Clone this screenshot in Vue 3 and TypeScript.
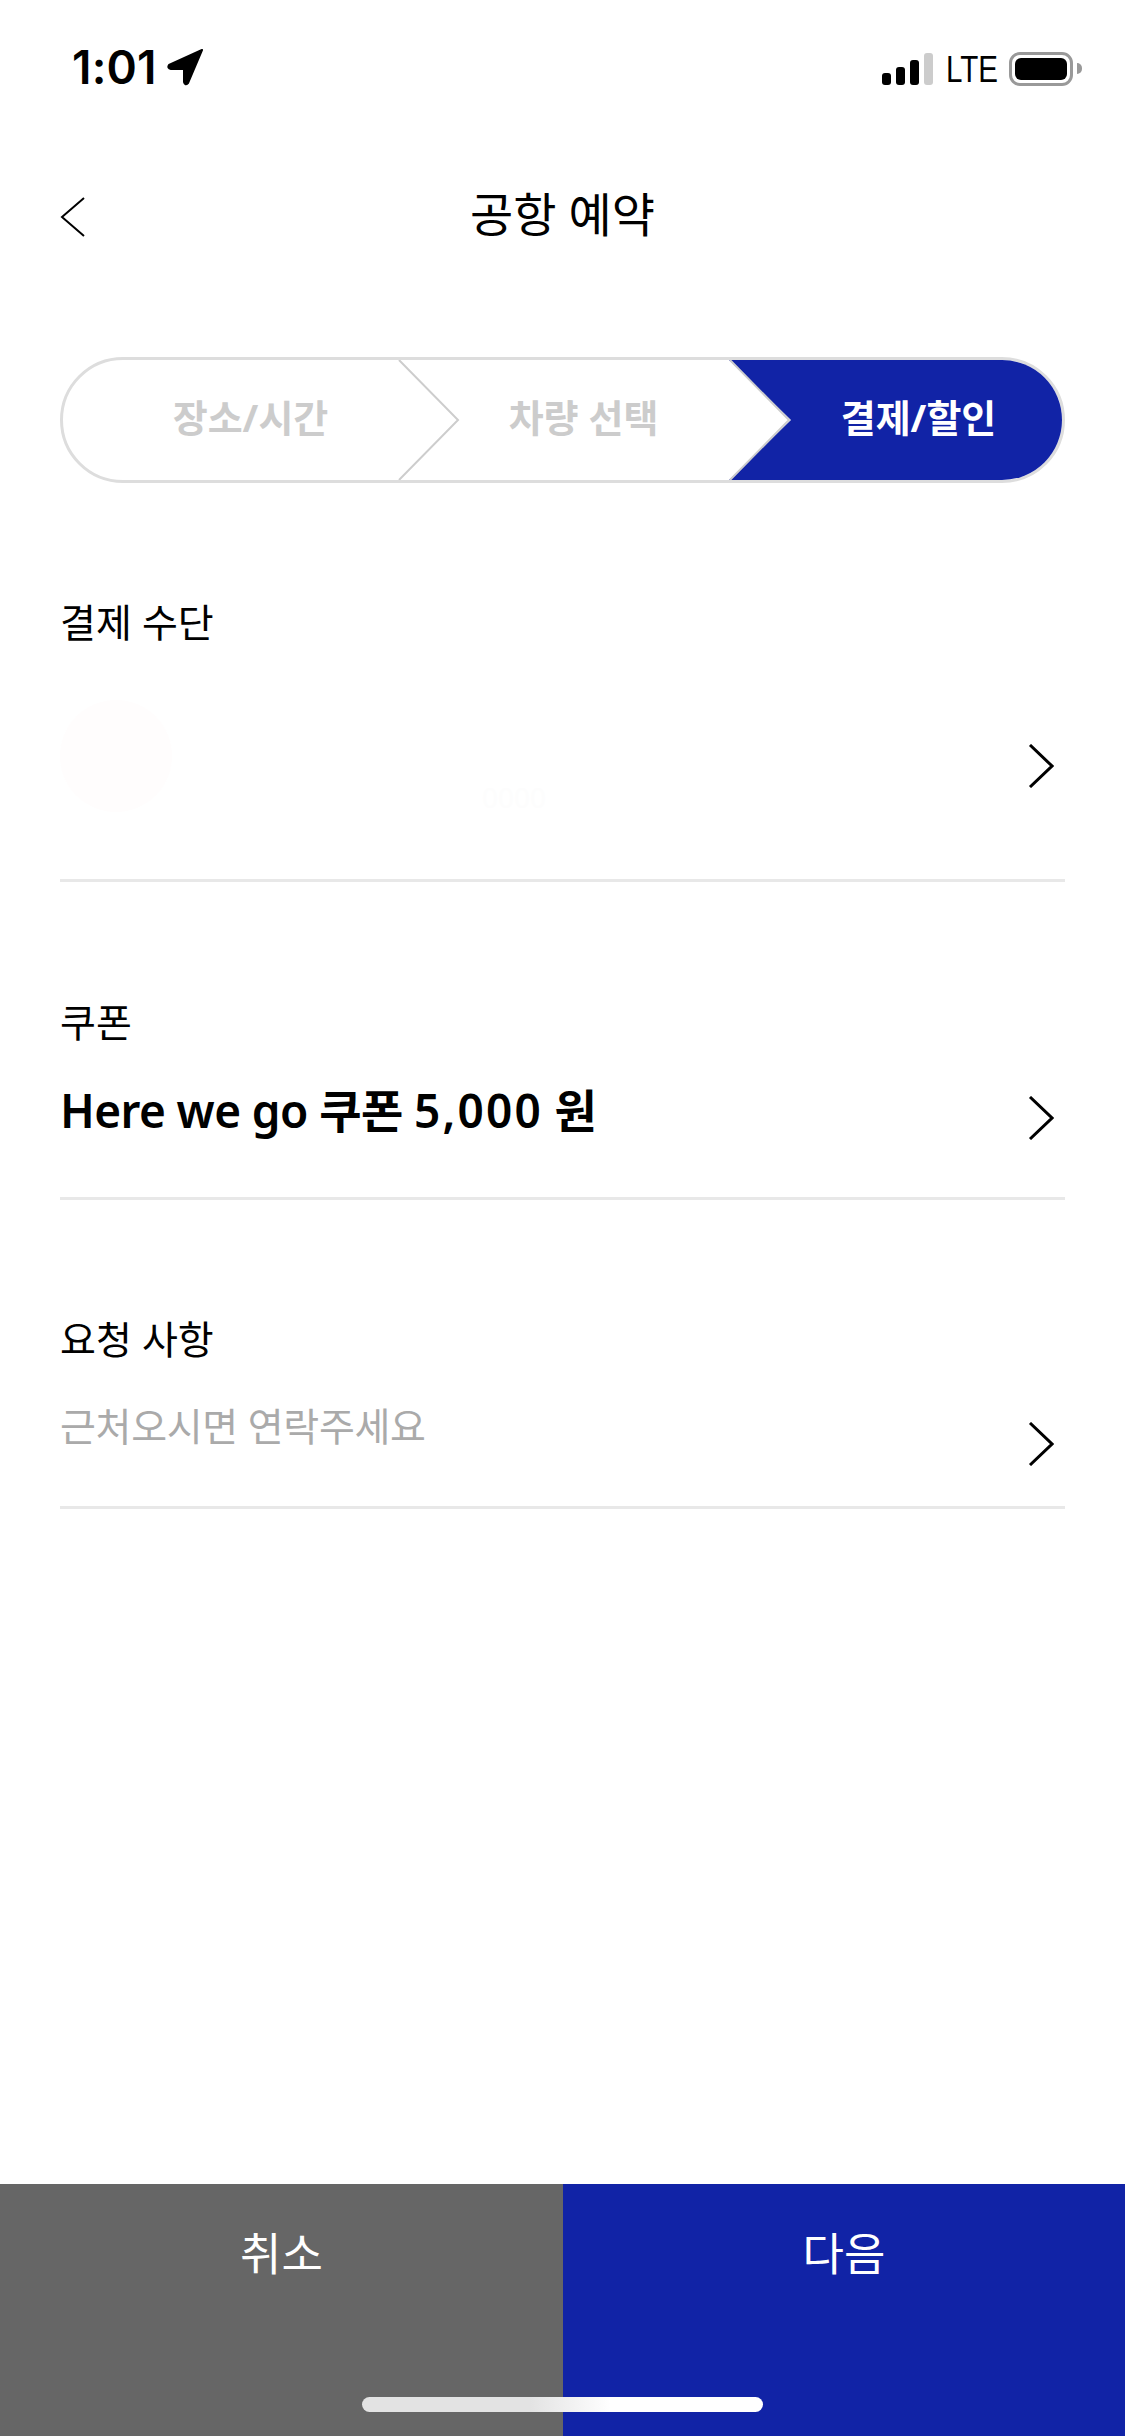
<template>
  <div class="page">
    <!-- Status bar -->
    <div class="status-bar">
      <div class="status-left">
        <span class="time">1:01</span>
        <svg class="location" width="38" height="38" viewBox="0 0 38 38">
          <path d="M35 2 L2 17 Q0 20 4 21 L17 21 L17 34 Q18 38 21 35 Z" fill="#000" stroke="#000" stroke-width="2" stroke-linejoin="round" />
        </svg>
      </div>
      <div class="status-right">
        <div class="signal">
          <span v-for="bar in signalBars" :key="bar.height" class="bar" :class="{ off: bar.off }" :style="{ height: `${bar.height}px` }"></span>
        </div>
        <span class="lte">LTE</span>
        <div class="battery"><span class="battery-fill"></span></div>
        <span class="battery-nub"></span>
      </div>
    </div>

    <!-- Title -->
    <header class="nav">
      <svg class="back" width="26" height="40" viewBox="0 0 26 40">
        <path d="M24 1 L2 20 L24 39" fill="none" stroke="#000" stroke-width="2" />
      </svg>
      <h1 class="nav-title">공항 예약</h1>
    </header>

    <!-- Steps -->
    <div class="stepper">
      <div v-for="step in steps" :key="step.label" class="step" :class="step.kind">
        <span>{{ step.label }}</span>
        <svg v-if="step.kind !== 'active'" class="step-arrow" width="62" height="120" viewBox="0 0 62 120">
          <path d="M1 0 L60 60 L1 120" fill="none" stroke="#cdcdcd" stroke-width="2" />
        </svg>
      </div>
    </div>

    <!-- Payment -->
    <section class="section payment">
      <div class="label">결제 수단</div>
      <div class="body">
        <div class="card-info">
          <span class="card-logo"></span>
          <span class="card-number">0000</span>
        </div>
        <svg class="chevron" width="26" height="44" viewBox="0 0 26 44">
          <path d="M2 1 L24 22 L2 43" fill="none" stroke="#000" stroke-width="3" />
        </svg>
      </div>
    </section>

    <!-- Coupon -->
    <section class="section coupon">
      <div class="label">쿠폰</div>
      <div class="body">
        <div class="value strong">Here we go 쿠폰 <span class="amount">5,000</span> 원</div>
        <svg class="chevron" width="26" height="44" viewBox="0 0 26 44">
          <path d="M2 1 L24 22 L2 43" fill="none" stroke="#000" stroke-width="3" />
        </svg>
      </div>
    </section>

    <!-- Request -->
    <section class="section request">
      <div class="label">요청 사항</div>
      <div class="body">
        <div class="value muted">근처오시면 연락주세요</div>
        <svg class="chevron" width="26" height="44" viewBox="0 0 26 44">
          <path d="M2 1 L24 22 L2 43" fill="none" stroke="#000" stroke-width="3" />
        </svg>
      </div>
    </section>

    <!-- Bottom buttons -->
    <footer class="footer">
      <button class="action cancel">취소</button>
      <button class="action next">다음</button>
      <span class="home-indicator"></span>
    </footer>
  </div>
</template>

<script setup lang="ts">
interface Step {
  label: string;
  kind: "first" | "middle" | "active";
}

const steps: Step[] = [
  { label: "장소/시간", kind: "first" },
  { label: "차량 선택", kind: "middle" },
  { label: "결제/할인", kind: "active" },
];

const signalBars = [
  { height: 12, off: false },
  { height: 18, off: false },
  { height: 25, off: false },
  { height: 32, off: true },
];
</script>

<style>
html,
body {
  margin: 0;
  background: #fff;
}
</style>

<style scoped>
.page {
  display: flex;
  flex-direction: column;
  width: 1125px;
  height: 2436px;
  overflow: hidden;
  background: #fff;
  color: #000;
  font-family: "Noto Sans", "Noto Sans CJK KR", sans-serif;
}

/* Status bar */
.status-bar {
  display: flex;
  justify-content: space-between;
  height: 100px;
  flex: none;
}

.status-left {
  display: flex;
  align-items: center;
  gap: 10px;
  padding: 34px 0 0 72px;
  height: 66px;
}

.time {
  font-family: Inter, sans-serif;
  font-size: 46px;
  font-weight: 600;
  line-height: 66px;
  letter-spacing: 0.2px;
}

.status-right {
  display: flex;
  align-items: flex-start;
  padding: 52px 43px 0 0;
}

.signal {
  display: flex;
  align-items: flex-end;
  gap: 5px;
  height: 33px;
  margin-right: 13px;
}

.bar {
  width: 9px;
  background: #000;
  border-radius: 3px;
}

.bar.off {
  background: #ccc;
}

.lte {
  font-family: "Liberation Sans", sans-serif;
  font-size: 36px;
  line-height: 36px;
  margin-right: 12px;
  width: 51px;
  white-space: nowrap;
  transform: scaleX(0.82);
  transform-origin: left center;
}

.battery {
  box-sizing: border-box;
  width: 64px;
  height: 34px;
  padding: 3px;
  border: 3px solid #999;
  border-radius: 11px;
  display: flex;
}

.battery-fill {
  flex: 1;
  background: #000;
  border-radius: 6px;
}

.battery-nub {
  width: 5px;
  height: 11px;
  margin: 11px 0 0 4px;
  background: #999;
  border-radius: 0 5px 5px 0;
}

/* Title */
.nav {
  position: relative;
  flex: none;
  height: 80px;
  margin-top: 77px;
  display: flex;
  align-items: center;
  justify-content: center;
}

.back {
  position: absolute;
  left: 60px;
  top: 20px;
}

.nav-title {
  margin: 0 0 5px;
  font-size: 47px;
  font-weight: 400;
  line-height: 75px;
}

/* Steps */
.stepper {
  flex: none;
  box-sizing: border-box;
  display: flex;
  width: 1005px;
  height: 126px;
  margin: 100px 0 0 60px;
  border: 3px solid #ddd;
  border-radius: 63px;
  overflow: hidden;
}

.step {
  position: relative;
  box-sizing: border-box;
  display: flex;
  align-items: center;
  justify-content: center;
  padding-bottom: 10px;
  font-size: 38px;
  font-weight: 700;
  color: #ccc;
}

.step.first {
  width: 335px;
  padding-left: 40px;
}

.step.middle {
  width: 331px;
  padding-left: 40px;
}

.step.active {
  width: 333px;
  padding-left: 46px;
  color: #fff;
  background: #1123a6;
  clip-path: polygon(0 0, 100% 0, 100% 100%, 0 100%, 62px 50%);
}

.step-arrow {
  position: absolute;
  top: 0;
  left: 100%;
  z-index: 1;
}

/* Sections */
.section {
  flex: none;
  box-sizing: border-box;
  margin: 0 60px;
  border-bottom: 3px solid #e8e8e8;
}

.section.payment {
  height: 399px;
  padding-top: 109px;
}

.section.coupon {
  height: 318px;
  padding-top: 110px;
}

.section.request {
  height: 309px;
  padding-top: 109px;
}

.label {
  font-size: 39px;
  line-height: 60px;
}

.body {
  display: flex;
  align-items: flex-start;
  justify-content: space-between;
  padding-right: 11px;
}

.payment .body {
  margin-top: 48px;
}

.coupon .body {
  margin-top: 23px;
}

.request .body {
  margin-top: 27px;
}

.payment .chevron {
  margin-top: 44px;
}

.coupon .chevron {
  margin-top: 21px;
}

.request .chevron {
  margin-top: 26px;
}

/* Faint payment card placeholder */
.card-info {
  display: flex;
  align-items: flex-end;
  gap: 310px;
}

.card-logo {
  width: 112px;
  height: 112px;
  border-radius: 50%;
  background: #fffdfd;
}

.card-number {
  font-size: 28px;
  line-height: 30px;
  color: #fdfdfd;
}

.value {
  white-space: nowrap;
}

.value.strong {
  font-size: 46px;
  font-weight: 600;
  line-height: 70px;
  letter-spacing: -0.6px;
}

.amount {
  letter-spacing: 2.2px;
}

.value.muted {
  font-size: 39px;
  line-height: 60px;
  letter-spacing: -0.3px;
  color: #aaa;
}

/* Bottom buttons */
.footer {
  position: relative;
  display: flex;
  flex: none;
  height: 252px;
  margin-top: auto;
}

.action {
  width: 50%;
  height: 100%;
  padding: 39px 0 0;
  border: 0;
  color: #fff;
  font-family: inherit;
  font-size: 45px;
  line-height: 62px;
  display: flex;
  justify-content: center;
  align-items: flex-start;
}

.cancel {
  width: 563px;
  background: #666;
}

.next {
  width: 562px;
  background: #1123a6;
}

.home-indicator {
  position: absolute;
  left: 362px;
  bottom: 24px;
  width: 401px;
  height: 15px;
  border-radius: 8px;
  background: linear-gradient(90deg, #e3e3e3 0, #e3e3e3 42%, #fff 62%);
}
</style>
